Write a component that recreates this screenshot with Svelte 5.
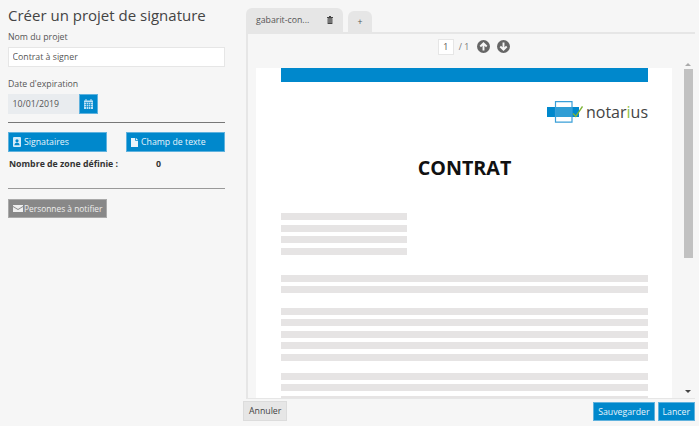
<script>
  let projectName = "Contrat à signer";
  let expiry = "10/01/2019";

  // grey placeholder lines of the document preview, grouped by paragraph
  const paragraphs = [
    { short: true, lines: 4, after: 20 },
    { short: false, lines: 2, after: 14.5 },
    { short: false, lines: 5, after: 12 },
    { short: false, lines: 3, after: 0 },
  ];
</script>

<div class="app">
  <aside class="side">
    <h1>Créer un projet de signature</h1>
    <label class="label" for="name">Nom du projet</label>
    <input id="name" class="text" type="text" bind:value={projectName} />

    <label class="label date-label" for="date">Date d'expiration</label>
    <div class="date">
      <input id="date" class="text disabled" type="text" value={expiry} disabled />
      <button class="btn cal" aria-label="Calendrier">
        <svg width="9" height="10" viewBox="0 0 9 10" fill="none">
          <path d="M0 1.500h9V10H0z" fill="#bfe2f6" />
          <path d="M.5 3.500h8M.5 5.500h8M.5 7.500h8M2.500 3.500V10M4.500 3.500V10M6.500 3.500V10" stroke="#0088cc" stroke-width=".6" />
          <path d="M2 0v2M7 0v2" stroke="#bfe2f6" />
        </svg>
      </button>
    </div>

    <hr class="dark" />

    <div class="pair">
      <button class="btn blue">
        <svg width="8" height="10" viewBox="0 0 8 10">
          <path d="M1 0h6a1 1 0 0 1 1 1v8a1 1 0 0 1-1 1H1a1 1 0 0 1-1-1V1a1 1 0 0 1 1-1z" fill="#d5ebf8" />
          <circle cx="4" cy="3.800" r="1.600" fill="#0088cc" />
          <path d="M1.400 8.200c0-1.700 1.100-2.500 2.600-2.500s2.600.8 2.600 2.500z" fill="#0088cc" />
        </svg>
        Signataires
      </button>
      <button class="btn blue">
        <svg width="7" height="9" viewBox="0 0 7 9">
          <path d="M0 0h4.200v2.800H7V9H0z" fill="#e8f4fb" />
          <path d="M5 0l2 2H5z" fill="#e8f4fb" />
        </svg>
        Champ de texte
      </button>
    </div>

    <div class="count">
      <span>Nombre de zone définie :</span>
      <span class="num">0</span>
    </div>

    <hr class="light" />

    <button class="btn grey">
      <svg width="10" height="7" viewBox="0 0 10 7">
        <path d="M0 0h10v1L5 4 0 1z" fill="#efefef" />
        <path d="M0 2l5 3 5-3v5H0z" fill="#efefef" />
      </svg>
      Personnes à notifier
    </button>
  </aside>

  <main class="main">
    <div class="tabs">
      <div class="tab active">
        <span>gabarit-con...</span>
        <svg width="6" height="8" viewBox="0 0 6 8">
          <path d="M0 1h6v1H0zM2 0h2v1H2z" fill="#444" />
          <path d="M.6 2.300h4.800V8H.6zM1.700 3v4h.6V3zM3.700 3v4h.6V3z" fill="#444" fill-rule="evenodd" />
        </svg>
      </div>
      <div class="tab plus">+</div>
    </div>

    <div class="frame">
      <div class="pager">
        <span class="page-box">1</span>
        <span class="total">/ 1</span>
        <svg class="arrow" width="13" height="13" viewBox="0 0 13 13">
          <circle cx="6.500" cy="6.500" r="6.500" fill="#666" />
          <path d="M6.500 10.500V3.500M3.300 6.500l3.200-3.200 3.200 3.200" stroke="#f6f6f6" stroke-width="1.900" fill="none" />
        </svg>
        <svg class="arrow" width="13" height="13" viewBox="0 0 13 13">
          <circle cx="6.500" cy="6.500" r="6.500" fill="#666" />
          <path d="M6.500 2.500V9.500M3.300 6.500l3.200 3.200 3.200-3.200" stroke="#f6f6f6" stroke-width="1.900" fill="none" />
        </svg>
      </div>

      <div class="viewer">
        <div class="sheet">
          <div class="bar"></div>
          <div class="logo">
            <svg width="36" height="22" viewBox="0 0 36 22">
              <path d="M0 6h32v10H0z" fill="#0088cc" />
              <path d="M8.500.7h16.500v20.500H8.500z" fill="#ffffff30" stroke="#3a9fd8" stroke-width="1.200" />
              <path d="M26 12.500l2.800 2.800L35.500 5.500" fill="none" stroke="#7fb539" stroke-width="1.400" />
            </svg>
            <span class="word">notar<span class="i">i</span>us</span>
          </div>
          <h2>CONTRAT</h2>
          <div class="body">
            {#each paragraphs as p}
              <div class="para" class:short={p.short} style="margin-bottom: {p.after}px">
                {#each Array(p.lines) as _}
                  <div class="line"></div>
                {/each}
              </div>
            {/each}
          </div>
        </div>
        <div class="scroll">
          <span class="up"></span>
          <div class="thumb"></div>
          <span class="down"></span>
        </div>
      </div>
    </div>

    <div class="actions">
      <button class="btn cancel">Annuler</button>
      <div class="right">
        <button class="btn blue">Sauvegarder</button>
        <button class="btn blue">Lancer</button>
      </div>
    </div>
  </main>
</div>

<style>
  :global(body) {
    background: #f6f6f6;
  }
  .app {
    display: flex;
    width: 699px;
    height: 426px;
    overflow: hidden;
    font-family: "Open Sans", sans-serif;
    font-size: 8.750px;
    color: #555;
    background: #f6f6f6;
  }
  .side {
    width: 217px;
    margin: 0 21px 0 8px;
    display: flex;
    flex-direction: column;
    align-items: flex-start;
  }
  h1 {
    margin: 5px 0 0;
    font-size: 15px;
    line-height: 20px;
    font-weight: 400;
    color: #444;
    white-space: nowrap;
  }
  .label {
    margin-top: 5px;
    line-height: 15px;
  }
  .date-label {
    margin-top: 10px;
  }
  .text {
    box-sizing: border-box;
    display: block;
    width: 217px;
    height: 20px;
    margin-top: 2px;
    padding: 0 3.500px;
    border: 1px solid #e6e6e6;
    background: #fff;
    font: inherit;
    color: #555;
    outline: none;
  }
  .date {
    display: flex;
    margin-top: 2px;
  }
  .date .text {
    width: 71px;
    margin: 0;
  }
  .disabled {
    background: #e9ecef;
    border-color: #e9ecef;
    opacity: 1;
  }
  .btn {
    box-sizing: border-box;
    height: 20px;
    padding: 0 4px;
    border: 1px solid transparent;
    font: inherit;
    display: inline-flex;
    align-items: center;
    gap: 3px;
    white-space: nowrap;
  }
  .btn svg {
    flex: none;
  }
  .btn.blue,
  .cal {
    background: #0088cc;
    color: #e8f4fb;
    border-color: #5fb2de;
  }
  .cal {
    width: 19px;
    justify-content: center;
    padding: 0;
  }
  hr {
    width: 217px;
    margin: 0;
    border: 0;
  }
  hr.dark {
    height: 1px;
    margin-top: 8px;
    background: #777;
  }
  hr.light {
    height: 1px;
    margin-top: 16px;
    background: #999;
  }
  .pair {
    width: 217px;
    display: flex;
    justify-content: space-between;
    margin-top: 9px;
  }
  .pair .btn {
    width: 99px;
  }
  .count {
    display: flex;
    margin: 5px 0 0 1px;
    line-height: 15px;
    font-weight: 700;
    color: #333;
  }
  .num {
    margin-left: 38px;
  }
  .btn.grey {
    margin-top: 10px;
    width: 99px;
    height: 19px;
    background: #888;
    border-color: #aaa;
    color: #eee;
    gap: 1px;
    font-size: 8.400px;
  }
  .main {
    flex: 1;
    min-width: 0;
    display: flex;
    flex-direction: column;
    padding-right: 4px;
  }
  .tabs {
    display: flex;
    align-items: flex-end;
    gap: 5px;
    height: 32px;
  }
  .tab {
    background: #e6e6e6;
    border-radius: 6px 6px 0 0;
    display: flex;
    align-items: center;
    height: 21px;
    justify-content: center;
  }
  .tab.active {
    width: 97px;
    height: 24px;
    justify-content: space-between;
    box-sizing: border-box;
    padding: 0 10px;
  }
  .tab.plus {
    width: 24px;
  }
  .frame {
    height: 367px;
    box-sizing: border-box;
    border: 2px solid #e6e6e6;
    border-bottom-width: 1px;
    border-right: 0;
    display: flex;
    flex-direction: column;
    overflow: hidden;
  }
  .pager {
    height: 34px;
    flex: none;
    display: flex;
    align-items: flex-start;
    justify-content: center;
    padding-top: 5px;
    box-sizing: border-box;
    margin-left: 12px;
  }
  .page-box {
    box-sizing: border-box;
    width: 16px;
    height: 16px;
    line-height: 14px;
    text-align: center;
    background: #fff;
    border: 1px solid #e6e6e6;
  }
  .total {
    margin: 1px 8px 0 5px;
    color: #777;
    line-height: 14px;
  }
  .arrow {
    margin-top: 1px;
    margin-right: 7px;
  }
  .viewer {
    flex: 1;
    min-height: 0;
    display: flex;
    padding-left: 8px;
  }
  .sheet {
    width: 416px;
    box-sizing: border-box;
    padding: 0 24px 0 25px;
    background: #fff;
    overflow: hidden;
  }
  .bar {
    height: 14px;
    background: #0088cc;
  }
  .logo {
    display: flex;
    justify-content: flex-end;
    align-items: center;
    gap: 3px;
    margin-top: 20px;
    height: 20px;
  }
  .word {
    font-size: 16px;
    color: #444;
    line-height: 20px;
  }
  .i {
    color: #8fbf3f;
  }
  h2 {
    margin: 32px 0 0;
    text-align: center;
    font-size: 19.700px;
    line-height: 28px;
    font-weight: 700;
    color: #111;
  }
  .body {
    margin-top: 31px;
  }
  .para {
    display: flex;
    flex-direction: column;
    gap: 4.500px;
  }
  .line {
    height: 7px;
    background: #e6e4e4;
  }
  .short {
    width: 126px;
  }
  .scroll {
    width: 10px;
    margin: -8px 0 0 11px;
    display: flex;
    flex-direction: column;
    align-items: center;
    position: relative;
  }
  .thumb {
    width: 9px;
    height: 189px;
    margin-top: 9px;
    background: #c1c1c1;
  }
  .up,
  .down {
    position: absolute;
    left: 2px;
    width: 0;
    height: 0;
    border-left: 3px solid transparent;
    border-right: 3px solid transparent;
  }
  .up {
    top: 3px;
    border-bottom: 3px solid #aaa;
  }
  .down {
    bottom: 5px;
    border-top: 3px solid #444;
  }
  .actions {
    display: flex;
    justify-content: space-between;
    margin-top: 2px;
    margin-left: -3px;
  }
  .right {
    display: flex;
    gap: 3px;
    margin-top: 1px;
  }
  .right .btn {
    height: 19px;
  }
  .btn.cancel {
    background: #e6e6e6;
    border-color: #dcdcdc;
    color: #444;
    padding: 0 5px;
  }
</style>
